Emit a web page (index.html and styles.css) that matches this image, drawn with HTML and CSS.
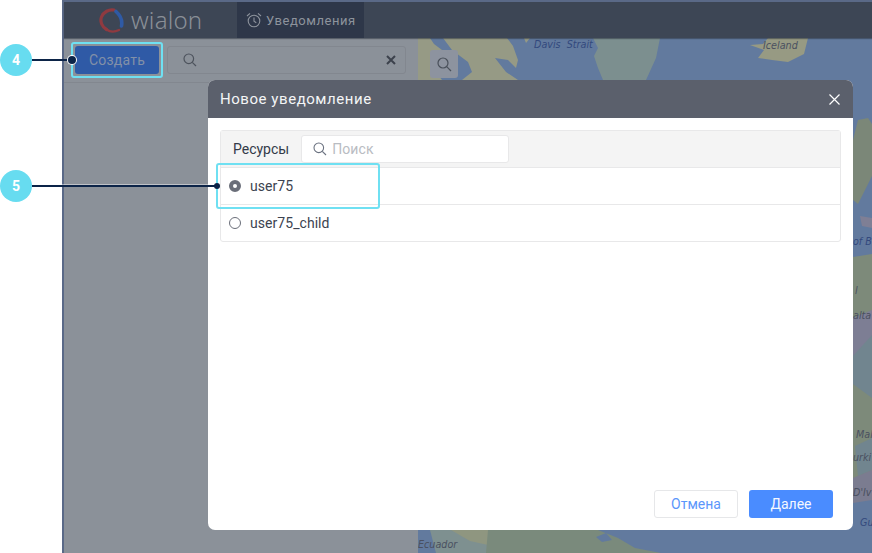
FILE: index.html
```html
<!DOCTYPE html>
<html lang="ru">
<head>
<meta charset="utf-8">
<title>Новое уведомление</title>
<link rel="stylesheet" href="styles.css">
</head>
<body>
<div class="app">
  <header class="topbar">
    <div class="logo">
      <svg class="logo-mark" width="25" height="26" viewBox="0 0 25 26" fill="none">
        <path d="M15 2C10 1 4.500 4 2.500 9C.8 13.500 3 19 7.500 21.500" stroke="#8f3a40" stroke-width="3.200" stroke-linecap="round"/>
        <path d="M7.500 21.500C11 24 16 24 20 22" stroke="#8f3a40" stroke-width="2.400" stroke-linecap="round"/>
        <path d="M17 3.500C21.500 7.500 23.500 13 22.500 18" stroke="#2f5aa5" stroke-width="3.600" stroke-linecap="round"/>
      </svg>
      <span class="logo-text">wialon</span>
    </div>
    <div class="tab">
      <svg width="16" height="16" viewBox="0 0 16 16" fill="none" stroke="#8d939c" stroke-width="1.100">
        <circle cx="8" cy="9" r="5.800"/>
        <path d="M8 5.500V9.300L10.300 10.800M1 4L4 1.300M15 4L12 1.300"/>
      </svg>
      <span>Уведомления</span>
    </div>
  </header>
  <div class="workspace">
    <aside class="panel">
      <div class="toolbar">
        <button class="create">Создать</button>
        <div class="list-search">
          <svg width="14" height="14" viewBox="0 0 14 14" fill="none" stroke="#4d535d" stroke-width="1.200"><circle cx="5.800" cy="5.800" r="4.800"/><path d="M9.300 9.300L13 13"/></svg>
          <svg class="clear" width="10" height="10" viewBox="0 0 10 10" fill="none" stroke="#3c424c" stroke-width="2"><path d="M1 1L9 9M9 1L1 9"/></svg>
        </div>
      </div>
    </aside>
    <main class="map">
      <svg class="map-art" width="454" height="515" viewBox="418 38 454 515">
        <rect x="418" y="38" width="454" height="515" fill="#627a9e"/>
        <path d="M418 38H430L434 44L442 50L438 56L444 62L436 72L442 80H418Z" fill="#969a85"/>
        <path d="M443 38H507L513 46L518 60L516 68L508 60L495 58L506 72L518 80H462L472 72L468 62L452 50Z" fill="#969a85"/>
        <path d="M524 38H530L526 43Z" fill="#969a85"/>
        <path d="M593 38H660L656 58L646 80H603L598 68L594 56L598 48Z" fill="#7c8f8f"/>
        <path d="M750 45L763 44L768 38H808L804 54L788 62L772 60L758 58L764 50Z" fill="#979a83"/>
        <path d="M853 140L858 120L868 118L872 124V176L858 204L853 200Z" fill="#7b8778"/>
        <path d="M860 216L872 218V228L862 226Z" fill="#7f7f95"/>
        <path d="M853 257L872 254V312L853 318Z" fill="#7d8a7a"/>
        <path d="M853 318L872 310V400L853 384Z" fill="#7d7e94"/>
        <path d="M853 356L872 335V400L853 384Z" fill="#71858f"/>
        <path d="M853 384L872 398V480L853 480Z" fill="#7d8a7a"/>
        <path d="M855 446L872 438V470L858 476Z" fill="#71858f"/>
        <path d="M853 478L872 470V500L853 503Z" fill="#7b7c90"/>
        <path d="M430 530H490L488 553H436Z" fill="#7e9090"/>
        <path d="M451 530H490L488 545L470 541Z" fill="#8f9680"/>
        <path d="M488 530H598L618 538L635 548L661 553H486Z" fill="#7a8a7c"/>
        <path d="M596 537L606 533L612 540L602 542Z" fill="#627a9e"/>
        <text class="map-label" x="534" y="48">Davis  Strait</text>
        <text class="map-label dark" x="763" y="49">Iceland</text>
        <text class="map-label" x="853" y="245">of Bi</text>
        <text class="map-label dark" x="855" y="294">l</text>
        <text class="map-label dark" x="853" y="319">alta</text>
        <text class="map-label dark" x="856" y="438">Mal</text>
        <text class="map-label dark" x="853" y="461">urki</text>
        <text class="map-label dark" x="853" y="496">D'Iv</text>
        <text class="map-label" x="860" y="526">Gu</text>
        <text class="map-label dark" x="418" y="548">Ecuador</text>
      </svg>
      <div class="map-search">
        <svg width="15" height="15" viewBox="0 0 15 15" fill="none" stroke="#4a505a" stroke-width="1.200"><circle cx="6" cy="6" r="5"/><path d="M9.700 9.700L14 14"/></svg>
      </div>
    </main>
  </div>
</div>

<section class="modal">
  <header class="modal-head">
    <span>Новое уведомление</span>
    <svg width="11" height="11" viewBox="0 0 11 11" fill="none" stroke="#fff" stroke-width="1.200"><path d="M.5.5L10.500 10.500M10.500.5L.5 10.500"/></svg>
  </header>
  <div class="modal-body">
    <div class="resources">
      <div class="res-head">
        <span class="res-title">Ресурсы</span>
        <div class="res-search">
          <svg width="14" height="14" viewBox="0 0 14 14" fill="none" stroke="#6b7280" stroke-width="1.100"><circle cx="5.800" cy="5.800" r="4.800"/><path d="M9.300 9.300L13 13"/></svg>
          <span>Поиск</span>
        </div>
      </div>
      <label class="res-row"><span class="radio on"></span>user75</label>
      <label class="res-row"><span class="radio"></span>user75_child</label>
    </div>
    <footer class="actions">
      <button class="btn ghost">Отмена</button>
      <button class="btn primary">Далее</button>
    </footer>
  </div>
</section>

<div class="callout callout-four">
  <span class="badge">4</span><span class="line"></span><span class="dot"></span>
</div>
<div class="frame frame-four"></div>
<div class="callout callout-five">
  <span class="badge">5</span><span class="line"></span><span class="dot small"></span>
</div>
<div class="frame frame-five"></div>
</body>
</html>
```
FILE: styles.css
```css
* { box-sizing: border-box; }
html, body { margin: 0; height: 100%; overflow: hidden; }
body {
  position: relative;
  width: 872px;
  height: 553px;
  background: #fff;
  font-family: Roboto, "Liberation Sans", sans-serif;
}
.app {
  margin-left: 62px;
  height: 553px;
  border-left: 2px solid #5a6987;
  border-top: 2px solid #5a6987;
  display: flex;
  flex-direction: column;
}
.topbar {
  height: 36px;
  background: #3d4655;
  display: flex;
  padding-left: 35px;
  flex: none;
  box-shadow: 0 1px 1px rgba(40, 48, 60, .5);
  position: relative;
  z-index: 1;
}
.logo {
  width: 138px;
  display: flex;
  align-items: center;
  gap: 7px;
}
.logo-mark { flex: none; margin-top: 1px; }
.logo-text {
  font-family: "Noto Sans", sans-serif;
  font-size: 24px;
  font-weight: 300;
  letter-spacing: .2px;
  line-height: 30px;
  color: #8a8f97;
}
.tab {
  width: 127px;
  background: #2e3749;
  display: flex;
  align-items: center;
  gap: 4px;
  padding-left: 9px;
  color: #8d939c;
  font-size: 13px;
  letter-spacing: .55px;
}
.workspace { flex: 1; display: flex; min-height: 0; }
.panel { width: 354px; background: #8b9199; flex: none; }
.toolbar {
  height: 45px;
  border-bottom: 1px solid #82878f;
  display: flex;
  align-items: center;
  padding: 0 12px 0 11px;
  gap: 8px;
}
.create {
  width: 84px;
  height: 28px;
  margin-top: -1px;
  border: 0;
  border-radius: 3px;
  background: #2f5aa6;
  color: #8290a8;
  font: 14px Roboto, sans-serif;
  letter-spacing: .2px;
  padding: 0;
}
.list-search {
  flex: 1;
  height: 28px;
  margin-top: -1px;
  border: 1px solid #82878f;
  border-radius: 3px;
  display: flex;
  align-items: center;
  justify-content: space-between;
  padding: 0 9px 0 15px;
}
.map { flex: 1; position: relative; overflow: hidden; }
.map-art { display: block; }
.map-label {
  font: italic 9.600px "DejaVu Sans", sans-serif;
  fill: #33497d;
  white-space: pre;
}
.map-label.dark { fill: #4a5060; }
.map-search {
  position: absolute;
  left: 12px;
  top: 12px;
  width: 28px;
  height: 28px;
  border-radius: 3px;
  background: #8d939f;
  display: flex;
  align-items: center;
  justify-content: center;
}
.modal {
  position: absolute;
  left: 208px;
  top: 80px;
  width: 645px;
  height: 450px;
  border-radius: 7px;
  overflow: hidden;
  background: #fff;
  display: flex;
  flex-direction: column;
}
.modal-head {
  height: 38px;
  flex: none;
  background: #5b606c;
  color: #f4f5f6;
  font-size: 15px;
  letter-spacing: .55px;
  display: flex;
  align-items: center;
  justify-content: space-between;
  padding: 0 13px 0 12px;
}
.modal-body {
  flex: 1;
  padding: 12px 12px 12px;
  display: flex;
  flex-direction: column;
  justify-content: space-between;
}
.resources {
  border: 1px solid #e8e8e9;
  border-radius: 3px;
}
.res-head {
  height: 36px;
  background: #f4f4f4;
  display: flex;
  align-items: center;
  gap: 12px;
  padding: 0 0 0 12px;
  font-size: 14px;
  color: #333a48;
}
.res-title { letter-spacing: 0; }
.res-search {
  width: 208px;
  height: 28px;
  background: #fff;
  border: 1px solid #e8e8e9;
  border-radius: 3px;
  display: flex;
  align-items: center;
  gap: 5px;
  padding-left: 11px;
  color: #b9bcc2;
  font-size: 14px;
  letter-spacing: .1px;
}
.res-row {
  height: 37px;
  border-top: 1px solid #e8e8e9;
  display: flex;
  align-items: center;
  gap: 9px;
  padding-left: 8px;
  font-size: 14px;
  letter-spacing: .05px;
  color: #3c4350;
}
.radio {
  width: 12px;
  height: 12px;
  border-radius: 50%;
  border: 1px solid #6a6e79;
  background: #fff;
}
.radio.on { border: 4px solid #6a6e79; }
.actions {
  display: flex;
  justify-content: flex-end;
  gap: 11px;
  padding-right: 8px;
}
.btn {
  width: 84px;
  height: 28px;
  border-radius: 3px;
  font: 14px Roboto, sans-serif;
  padding: 0;
}
.ghost { background: #fff; border: 1px solid #e6e7e9; color: #5b96fb; }
.primary { background: #4a8cff; border: 0; color: #f4f7ff; }
.callout {
  position: absolute;
  left: 0;
  display: flex;
  align-items: center;
}
.callout-four { top: 44px; }
.callout-five { top: 170px; }
.badge {
  width: 32px;
  height: 32px;
  border-radius: 50%;
  background: #67dcf0;
  color: #fff;
  font: bold 14px Roboto, sans-serif;
  display: flex;
  align-items: center;
  justify-content: center;
  flex: none;
}
.line { height: 2px; background: #0c2448; flex: none; }
.callout-four .line { width: 37px; }
.callout-five .line { width: 183px; box-shadow: 0 -1px 0 rgba(255, 255, 255, .45); }
.dot {
  width: 8px;
  height: 8px;
  border-radius: 50%;
  background: #0c2448;
  box-shadow: 0 0 0 1px #fff;
  margin-left: -1px;
  flex: none;
  position: relative;
  z-index: 2;
}
.dot.small { width: 6px; height: 6px; box-shadow: none; }
.frame {
  position: absolute;
  border: 2px solid #6fe0f2;
  border-radius: 3px;
}
.frame-four { left: 71px; top: 42px; width: 92px; height: 36px; }
.frame-five { left: 216px; top: 163px; width: 164px; height: 46px; }
.callout { z-index: 2; }
```
